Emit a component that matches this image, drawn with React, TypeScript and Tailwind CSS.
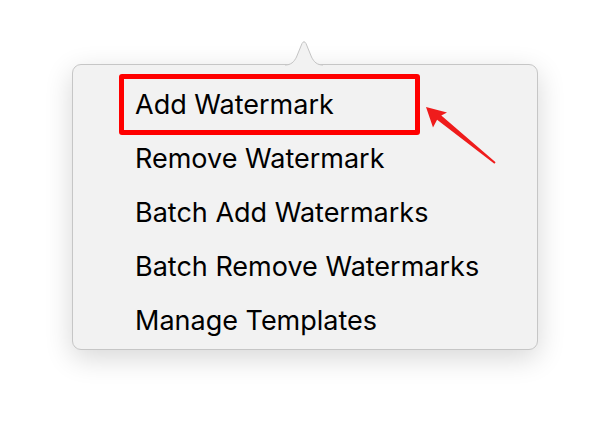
import React from 'react';

const items = ['Add Watermark', 'Remove Watermark', 'Batch Add Watermarks', 'Batch Remove Watermarks', 'Manage Templates'];

const Caret = () => (
    <svg className="absolute left-[212px] top-[-25px]" width="38" height="27" viewBox="0 0 38 27">
        <path d="M0 26 L0 25 C6 25 9 22 11.5 17 L17 3.5 Q19 0 21 3.5 L26.5 17 C29 22 32 25 38 25 L38 27 L0 27 Z" fill="#f2f2f2" />
        <path d="M0 25 C6 25 9 22 11.5 17 L17 3.5 Q19 0 21 3.5 L26.5 17 C29 22 32 25 38 25" fill="none" stroke="#c4c4c4" strokeWidth="1" />
    </svg>
);

const Arrow = () => (
    <svg className="absolute left-0 top-0" width="610" height="430" viewBox="0 0 610 430">
        <polygon
            points="426,107 447,112.5 441.3,115.6 495.6,162.3 494.4,163.7 437.1,119.8 433,127.5"
            fill="#ef1c1c"
        />
    </svg>
);

export default function App() {
    return (
        <div className="relative w-[610px] h-[430px] bg-white overflow-hidden pt-[64px] pl-[72px] font-['Inter',sans-serif]">
            <div className="relative w-[466px] h-[286px] bg-[#f2f2f2] border border-[#c6c6c6] rounded-[9px] shadow-[0_8px_28px_rgba(0,0,0,0.16)]">
                <Caret />
                <ul className="pt-[13px] pl-[62px]">
                    {items.map((item) => (
                        <li key={item} className="h-[54px] leading-[54px] text-[27px] text-black">
                            {item}
                        </li>
                    ))}
                </ul>
            </div>
            <div className="absolute left-[119px] top-[74px] w-[301px] h-[61px] border-[5px] border-[#ff0000] rounded-[3px]" />
            <Arrow />
        </div>
    );
}
